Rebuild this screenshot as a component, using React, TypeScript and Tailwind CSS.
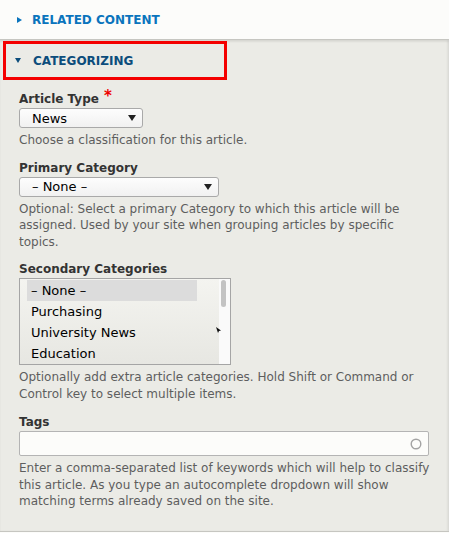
import React from 'react';

const sans = "font-['DejaVu_Sans','Liberation_Sans',sans-serif]";

function Caret({ open }: { open?: boolean }) {
  return open ? (
    <svg width="6" height="5" viewBox="0 0 6 5" className="shrink-0">
      <path d="M0 0h6L3 5z" fill="currentColor" />
    </svg>
  ) : (
    <svg width="5" height="6" viewBox="0 0 5 6" className="shrink-0">
      <path d="M0 0l5 3-5 3z" fill="currentColor" />
    </svg>
  );
}

function SelectArrow() {
  return (
    <svg width="8" height="6" viewBox="0 0 8 6">
      <path d="M0 0h8L4 6z" fill="#222" />
    </svg>
  );
}

function FakeSelect({ value, width }: { value: string; width: string }) {
  return (
    <div
      className={`${width} h-[20px] flex items-center justify-between pl-[12px] pr-[6px] rounded-[3px] border border-[#a9a9a9] bg-linear-to-b from-[#fdfdfd] to-[#f1f1f1] text-[13px] text-black leading-none`}
    >
      <span>{value}</span>
      <SelectArrow />
    </div>
  );
}

function Label({ children, required }: { children: React.ReactNode; required?: boolean }) {
  return (
    <div className="text-[12px] leading-[18px] font-bold text-[#333]">
      {children}
      {required && <span className="ml-[5px] text-[15px] leading-none text-[#e00] relative top-[-2px]">*</span>}
    </div>
  );
}

function Description({ children }: { children: React.ReactNode }) {
  return <div className="mt-1 w-[413px] text-[12px] leading-[16.5px] text-[#5e5e5e]">{children}</div>;
}

const secondary = ['– None –', 'Purchasing', 'University News', 'Education'];

export default function App() {
  return (
    <div className={`w-[449px] h-[533px] bg-[#fcfcfa] ${sans}`}>
      <div className="h-[39px] flex items-center gap-[10px] pl-[17px] text-[#0a74bd]">
        <Caret />
        <span className="text-[12px] font-bold tracking-normal">RELATED CONTENT</span>
      </div>

      <div className="h-[493px] border-t border-b border-[#c6c6c1] bg-[#ebebe6] shadow-[inset_0_2px_2px_rgba(0,0,0,0.07),inset_-2px_0_2px_rgba(0,0,0,0.05)]">
        <div className="ml-[3px] mt-[1px] w-[224px] h-[39px] border-[3px] border-[#f40000] flex items-center gap-[12px] pl-[9px] text-[#0c4d7c]">
          <Caret open />
          <span className="text-[12px] font-bold">CATEGORIZING</span>
        </div>

        <div className="pl-[19px] pt-[10px]">
          <div>
            <Label required>Article Type</Label>
            <FakeSelect value="News" width="w-[124px]" />
            <Description>Choose a classification for this article.</Description>
          </div>

          <div className="mt-[10px]">
            <Label>Primary Category</Label>
            <FakeSelect value="– None –" width="w-[200px]" />
            <Description>
              Optional: Select a primary Category to which this article will be assigned. Used by your site when grouping articles by specific topics.
            </Description>
          </div>

          <div className="mt-[10px]">
            <Label>Secondary Categories</Label>
            <div className="relative w-[212px] h-[87px] flex border border-[#a5a5a5] bg-linear-to-b from-[#f4f4f0] to-[#e7e7e2]">
              <div className="flex-1 pt-[1px] pl-[7px]">
                {secondary.map((item, i) => (
                  <div
                    key={item}
                    className={`w-[170px] h-[21px] flex items-center pl-[4px] text-[13px] text-black ${i === 0 ? 'bg-[#dcdcdc]' : ''}`}
                  >
                    {item}
                  </div>
                ))}
              </div>
              <div className="w-[11px] bg-[#fafafa] pt-[1px] pl-[2px]">
                <div className="w-[5px] h-[27px] rounded-full bg-[#c3c3c3]" />
              </div>
              <svg width="5" height="6" viewBox="0 0 5 6" className="absolute left-[196px] top-[48px]">
                <path d="M0 0l5 3.5-2 .4L2 6z" fill="#111" />
              </svg>
            </div>
            <Description>
              Optionally add extra article categories. Hold Shift or Command or Control key to select multiple items.
            </Description>
          </div>

          <div className="mt-[11px]">
            <Label>Tags</Label>
            <div className="w-[410px] h-[25px] flex items-center justify-end pr-[6px] border border-[#b4b4b4] rounded-[2px] bg-[#fcfcfa]">
              <svg width="12" height="12" viewBox="0 0 12 12">
                <circle cx="6" cy="6" r="4.8" fill="none" stroke="#a3a3a3" strokeWidth="1.4" />
              </svg>
            </div>
            <Description>
              Enter a comma-separated list of keywords which will help to classify this article. As you type an autocomplete dropdown will show matching terms already saved on the site.
            </Description>
          </div>
        </div>
      </div>
    </div>
  );
}
